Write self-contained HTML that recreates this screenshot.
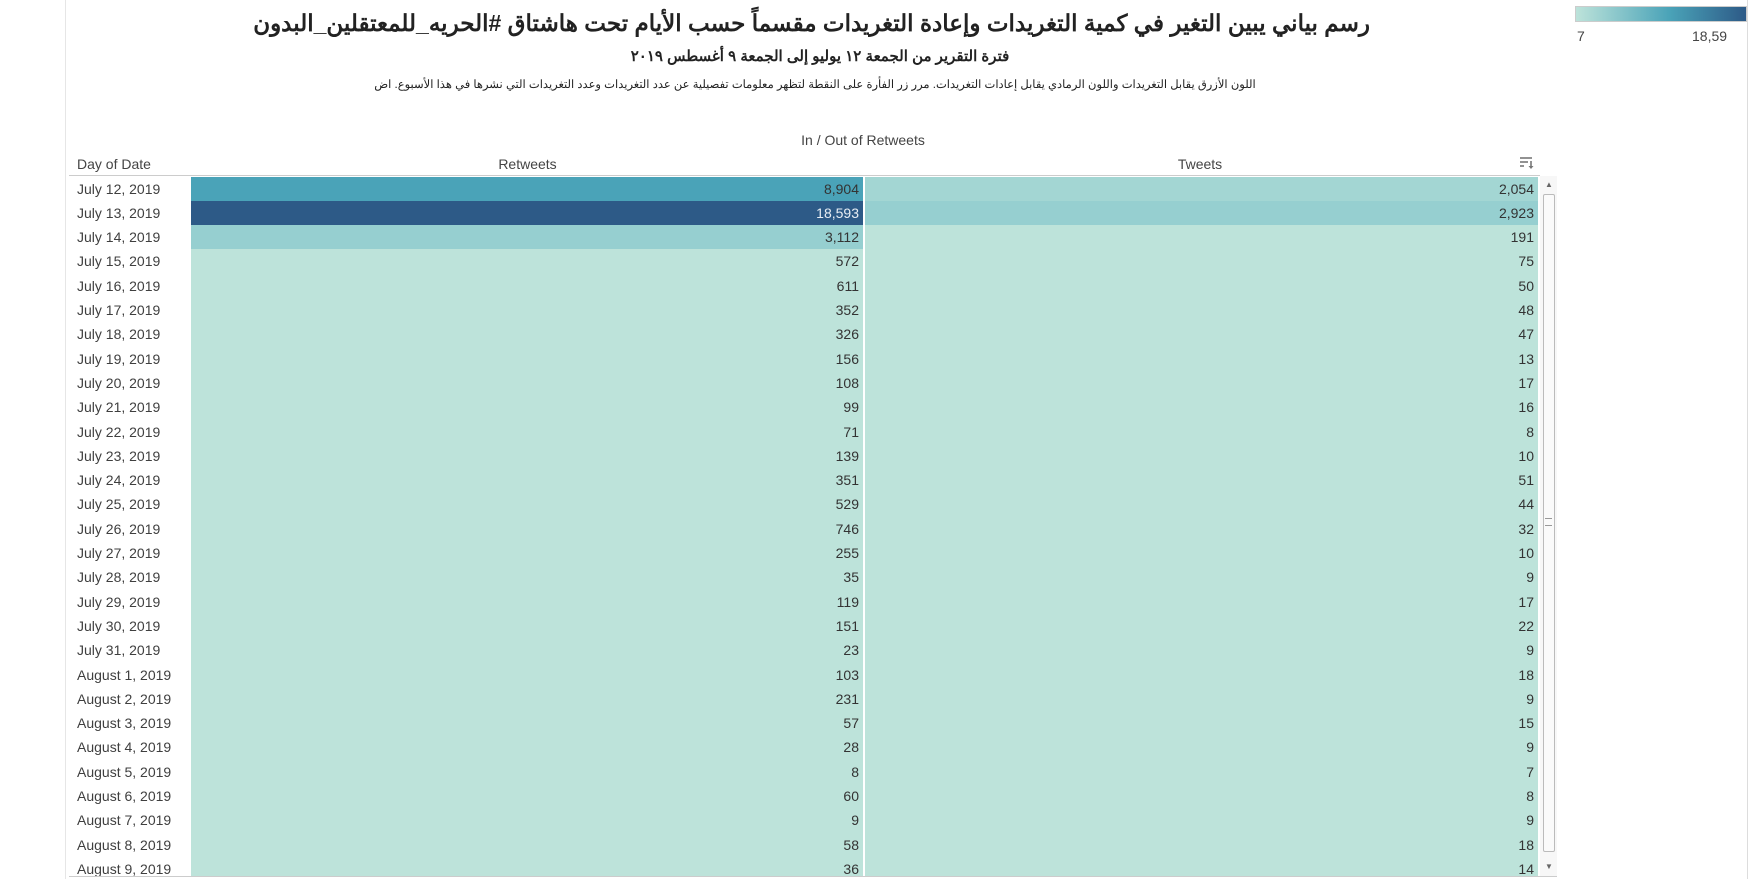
<!DOCTYPE html>
<html><head><meta charset="utf-8">
<style>
body{margin:0;width:1750px;height:879px;background:#fff;position:relative;overflow:hidden;font-family:"Liberation Sans",sans-serif;color:#444}
.a{position:absolute;white-space:nowrap}
.ar{font-family:"Liberation Sans","Noto Sans CJK SC",sans-serif;direction:rtl;color:#222}
.row{position:absolute;left:65px;width:1475px;height:25px;font-size:14px}
.d{position:absolute;left:12px;top:4px;color:#3f3f3f}
.r{position:absolute;left:126px;width:672px;height:100%;background:#bde3da;text-align:right;box-sizing:border-box;padding:4px 4px 0 0;color:#333}
.t{position:absolute;left:800px;width:673px;height:100%;background:#bde3da;text-align:right;box-sizing:border-box;padding:4px 4px 0 0;color:#333}
</style></head><body>
<div class="a" style="left:65px;top:0;width:1px;height:879px;background:#e6e6e6"></div>
<div class="a" style="left:1747px;top:0;width:1px;height:879px;background:#ddd"></div>
<div class="a ar" style="left:260px;width:1110px;top:10px;text-align:center;font-size:23px;font-weight:bold">رسم بياني يبين التغير في كمية التغريدات  وإعادة التغريدات مقسماً حسب الأيام تحت هاشتاق #الحريه_للمعتقلين_البدون</div>
<div class="a ar" style="left:560px;width:520px;top:47px;text-align:center;font-size:15px;font-weight:bold">فترة التقرير من الجمعة  ١٢ يوليو إلى الجمعة ٩ أغسطس ٢٠١٩</div>
<div class="a ar" style="left:350px;width:930px;top:77px;text-align:center;font-size:11.5px">اللون الأزرق يقابل التغريدات واللون الرمادي يقابل إعادات التغريدات. مرر زر الفأرة على النقطة لتظهر معلومات تفصيلية عن عدد التغريدات وعدد التغريدات التي نشرها في هذا الأسبوع. اض</div>
<div class="a" style="left:1575px;top:6px;width:172px;height:16px;background:linear-gradient(90deg,#bde3da,#4aa3b8 55%,#2d5a87);border:1px solid #ccc;box-sizing:border-box"></div>
<div class="a" style="left:1577px;top:28px;font-size:14px;color:#444">7</div>
<div class="a" style="left:1692px;top:28px;font-size:14px;color:#444">18,59</div>
<div class="a" style="left:780px;width:166px;top:132px;text-align:center;font-size:14px;color:#444">In / Out of Retweets</div>
<div class="a" style="left:77px;top:156px;font-size:14px;color:#444">Day of Date</div>
<div class="a" style="left:440px;width:175px;top:156px;text-align:center;font-size:14px;color:#444">Retweets</div>
<div class="a" style="left:1110px;width:180px;top:156px;text-align:center;font-size:14px;color:#444">Tweets</div>
<svg class="a" style="left:1519px;top:156px" width="16" height="14"><g stroke="#777" stroke-width="1.6"><line x1="1" y1="2" x2="13" y2="2"/><line x1="1" y1="6" x2="9" y2="6"/><line x1="1" y1="10" x2="5" y2="10"/><line x1="12" y1="5" x2="12" y2="12"/></g><path d="M9.5 10 L12 13 L14.5 10Z" fill="#777"/></svg>
<div class="a" style="left:69px;top:175px;width:1471px;height:1px;background:#ccc"></div>
<div class="a" style="left:1540px;top:176px;width:17px;height:700px;background:#f7f7f7"></div>
<div class="a" style="left:1543px;top:194px;width:12px;height:658px;background:#fafafa;border:1px solid #bbb;border-radius:2px;box-sizing:border-box"></div>
<div class="a" style="left:1545px;top:180px;font-size:8px;color:#666">▲</div>
<div class="a" style="left:1545px;top:862px;font-size:8px;color:#666">▼</div>
<div class="a" style="left:1545px;top:518px;width:7px;height:6px;border-top:1px solid #999;border-bottom:1px solid #999"></div>
<div class="a" style="left:69px;top:876px;width:1488px;height:1px;background:#ccc"></div>

<div class="row" style="top:176.5px"><span class="d">July 12, 2019</span><div class="r" style="background:#4aa3b8">8,904</div><div class="t" style="background:#a3d6d3">2,054</div></div>
<div class="row" style="top:200.8px"><span class="d">July 13, 2019</span><div class="r" style="background:#2d5a87;color:#e8eef4">18,593</div><div class="t" style="background:#96cfd0">2,923</div></div>
<div class="row" style="top:225.1px"><span class="d">July 14, 2019</span><div class="r" style="background:#96cfd0">3,112</div><div class="t">191</div></div>
<div class="row" style="top:249.4px"><span class="d">July 15, 2019</span><div class="r">572</div><div class="t">75</div></div>
<div class="row" style="top:273.7px"><span class="d">July 16, 2019</span><div class="r">611</div><div class="t">50</div></div>
<div class="row" style="top:298px"><span class="d">July 17, 2019</span><div class="r">352</div><div class="t">48</div></div>
<div class="row" style="top:322.3px"><span class="d">July 18, 2019</span><div class="r">326</div><div class="t">47</div></div>
<div class="row" style="top:346.6px"><span class="d">July 19, 2019</span><div class="r">156</div><div class="t">13</div></div>
<div class="row" style="top:370.9px"><span class="d">July 20, 2019</span><div class="r">108</div><div class="t">17</div></div>
<div class="row" style="top:395.2px"><span class="d">July 21, 2019</span><div class="r">99</div><div class="t">16</div></div>
<div class="row" style="top:419.5px"><span class="d">July 22, 2019</span><div class="r">71</div><div class="t">8</div></div>
<div class="row" style="top:443.8px"><span class="d">July 23, 2019</span><div class="r">139</div><div class="t">10</div></div>
<div class="row" style="top:468.1px"><span class="d">July 24, 2019</span><div class="r">351</div><div class="t">51</div></div>
<div class="row" style="top:492.4px"><span class="d">July 25, 2019</span><div class="r">529</div><div class="t">44</div></div>
<div class="row" style="top:516.7px"><span class="d">July 26, 2019</span><div class="r">746</div><div class="t">32</div></div>
<div class="row" style="top:541px"><span class="d">July 27, 2019</span><div class="r">255</div><div class="t">10</div></div>
<div class="row" style="top:565.3px"><span class="d">July 28, 2019</span><div class="r">35</div><div class="t">9</div></div>
<div class="row" style="top:589.6px"><span class="d">July 29, 2019</span><div class="r">119</div><div class="t">17</div></div>
<div class="row" style="top:613.9px"><span class="d">July 30, 2019</span><div class="r">151</div><div class="t">22</div></div>
<div class="row" style="top:638.2px"><span class="d">July 31, 2019</span><div class="r">23</div><div class="t">9</div></div>
<div class="row" style="top:662.5px"><span class="d">August 1, 2019</span><div class="r">103</div><div class="t">18</div></div>
<div class="row" style="top:686.8px"><span class="d">August 2, 2019</span><div class="r">231</div><div class="t">9</div></div>
<div class="row" style="top:711.1px"><span class="d">August 3, 2019</span><div class="r">57</div><div class="t">15</div></div>
<div class="row" style="top:735.4px"><span class="d">August 4, 2019</span><div class="r">28</div><div class="t">9</div></div>
<div class="row" style="top:759.7px"><span class="d">August 5, 2019</span><div class="r">8</div><div class="t">7</div></div>
<div class="row" style="top:784px"><span class="d">August 6, 2019</span><div class="r">60</div><div class="t">8</div></div>
<div class="row" style="top:808.3px"><span class="d">August 7, 2019</span><div class="r">9</div><div class="t">9</div></div>
<div class="row" style="top:832.6px"><span class="d">August 8, 2019</span><div class="r">58</div><div class="t">18</div></div>
<div class="row" style="top:856.9px;height:19px;overflow:hidden"><span class="d">August 9, 2019</span><div class="r">36</div><div class="t">14</div></div>
</body></html>
